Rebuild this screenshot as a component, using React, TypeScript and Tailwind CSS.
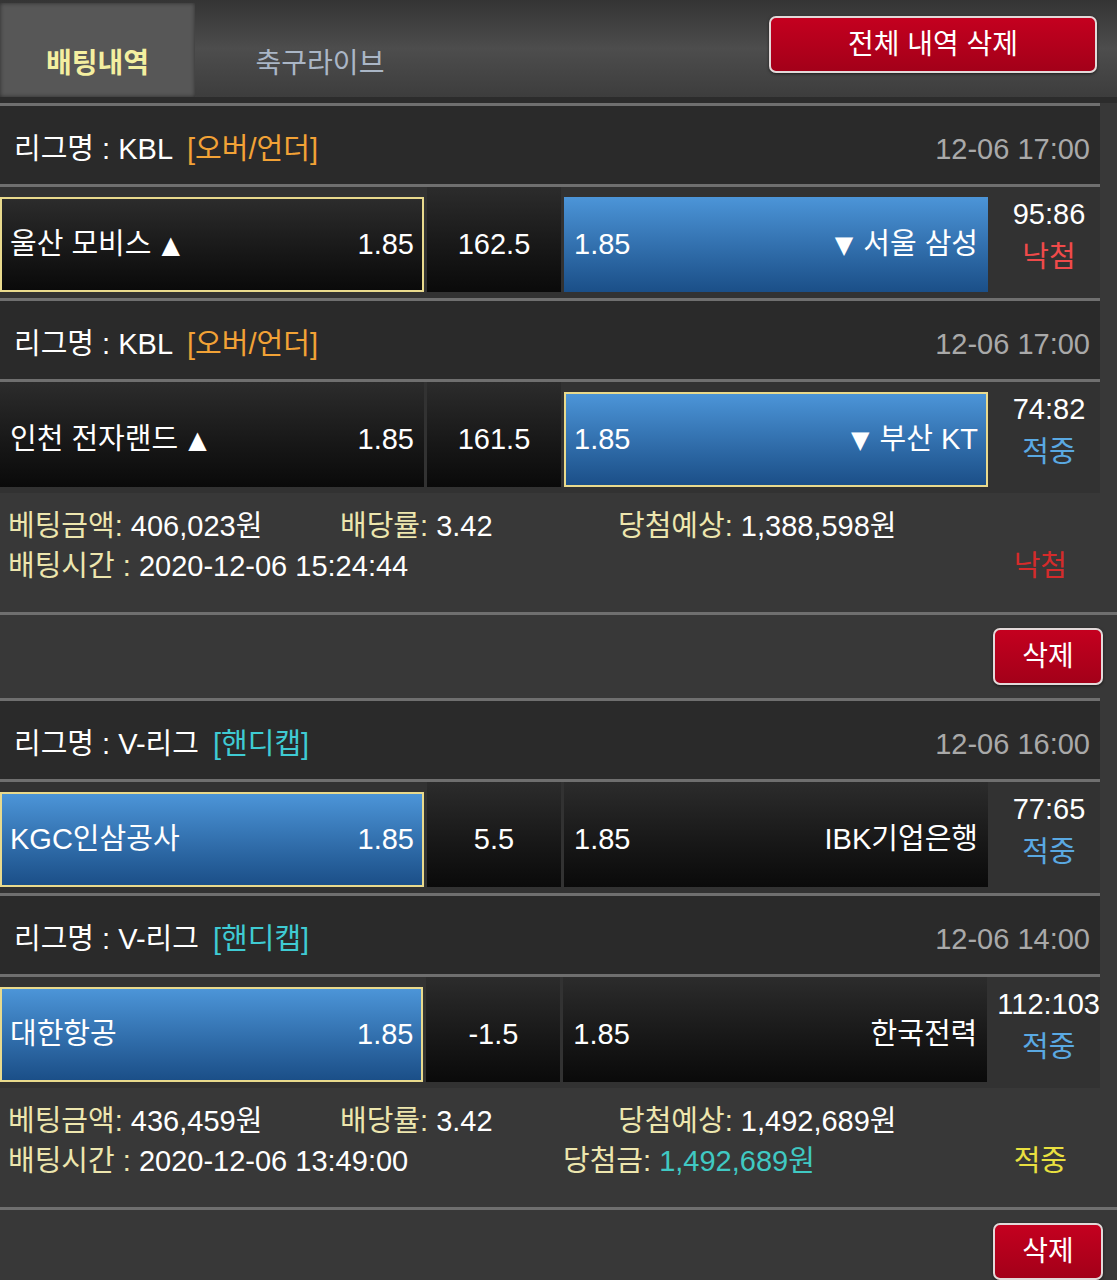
import React from 'react';

type Side = 'home' | 'away';

interface Match {
  league: string;
  tag: string;
  tagColor: string;
  date: string;
  home: string;
  homeArrow?: boolean;
  homeOdds: string;
  line: string;
  awayOdds: string;
  away: string;
  awayArrow?: boolean;
  winner: Side;
  pick: Side;
  score: string;
  hit: boolean;
}

interface Bet {
  matches: Match[];
  amount: string;
  rate: string;
  expected: string;
  time: string;
  payout?: string;
  hit: boolean;
}

const bets: Bet[] = [
  {
    matches: [
      {
        league: 'KBL',
        tag: '[오버/언더]',
        tagColor: 'text-[#f2a236]',
        date: '12-06 17:00',
        home: '울산 모비스',
        homeArrow: true,
        homeOdds: '1.85',
        line: '162.5',
        awayOdds: '1.85',
        away: '서울 삼성',
        awayArrow: true,
        winner: 'away',
        pick: 'home',
        score: '95:86',
        hit: false,
      },
      {
        league: 'KBL',
        tag: '[오버/언더]',
        tagColor: 'text-[#f2a236]',
        date: '12-06 17:00',
        home: '인천 전자랜드',
        homeArrow: true,
        homeOdds: '1.85',
        line: '161.5',
        awayOdds: '1.85',
        away: '부산 KT',
        awayArrow: true,
        winner: 'away',
        pick: 'away',
        score: '74:82',
        hit: true,
      },
    ],
    amount: '406,023원',
    rate: '3.42',
    expected: '1,388,598원',
    time: '2020-12-06 15:24:44',
    hit: false,
  },
  {
    matches: [
      {
        league: 'V-리그',
        tag: '[핸디캡]',
        tagColor: 'text-[#3fcbd3]',
        date: '12-06 16:00',
        home: 'KGC인삼공사',
        homeOdds: '1.85',
        line: '5.5',
        awayOdds: '1.85',
        away: 'IBK기업은행',
        winner: 'home',
        pick: 'home',
        score: '77:65',
        hit: true,
      },
      {
        league: 'V-리그',
        tag: '[핸디캡]',
        tagColor: 'text-[#3fcbd3]',
        date: '12-06 14:00',
        home: '대한항공',
        homeOdds: '1.85',
        line: '-1.5',
        awayOdds: '1.85',
        away: '한국전력',
        winner: 'home',
        pick: 'home',
        score: '112:103',
        hit: true,
      },
    ],
    amount: '436,459원',
    rate: '3.42',
    expected: '1,492,689원',
    time: '2020-12-06 13:49:00',
    payout: '1,492,689원',
    hit: true,
  },
];

function Line({ full }: { full?: boolean }) {
  return <div className={`h-[3px] bg-[#6f6f6f] ${full ? 'w-full' : 'w-[1100px]'}`} />;
}

function Triangle({ up }: { up?: boolean }) {
  return <span className="font-['DejaVu_Sans'] text-[24px]">{up ? '▲' : '▼'}</span>;
}

function TeamCell({
  blue,
  picked,
  children,
}: {
  blue: boolean;
  picked: boolean;
  children: React.ReactNode;
}) {
  const raised = blue || picked;
  return (
    <div
      className={`w-[424px] flex items-center justify-between ${
        raised ? 'mt-[10px] h-[95px]' : 'h-[105px] pt-[10px]'
      } ${
        blue
          ? 'bg-gradient-to-b from-[#4c95d8] to-[#1b4f88]'
          : 'bg-gradient-to-b from-[#2c2c2c] to-[#0a0a0a]'
      } ${picked ? 'border-2 border-[#e9da8d] px-[8px]' : 'px-[10px]'}`}
    >
      {children}
    </div>
  );
}

function MatchBlock({ m }: { m: Match }) {
  return (
    <>
      {/* League header */}
      <div className="w-[1100px] h-[78px] bg-[#2a2a2a] flex items-center justify-between pl-[14px] pr-[10px] pt-[9px]">
        <div className="text-white">
          리그명 : {m.league}
          <span className={`ml-[14px] ${m.tagColor}`}>{m.tag}</span>
        </div>
        <div className="text-[#a9a9a9]">{m.date}</div>
      </div>
      <Line />

      {/* Match row */}
      <div className="w-[1100px] h-[111px] flex items-start bg-[#323232]">
        <TeamCell blue={m.winner === 'home'} picked={m.pick === 'home'}>
          <span className="flex items-center gap-[10px]">
            {m.home}
            {m.homeArrow && <Triangle up />}
          </span>
          <span>{m.homeOdds}</span>
        </TeamCell>
        <div className="ml-[3px] w-[134px] h-[105px] pt-[10px] flex items-center justify-center bg-gradient-to-b from-[#2c2c2c] to-[#0a0a0a]">
          {m.line}
        </div>
        <div className="ml-[3px]">
          <TeamCell blue={m.winner === 'away'} picked={m.pick === 'away'}>
            <span>{m.awayOdds}</span>
            <span className="flex items-center gap-[10px]">
              {m.awayArrow && <Triangle />}
              {m.away}
            </span>
          </TeamCell>
        </div>
        <div className="flex-1 h-[105px] flex flex-col items-center pt-[6px] pl-[10px] leading-[43px]">
          <span className="text-white whitespace-nowrap">{m.score}</span>
          <span className={m.hit ? 'text-[#5aa9e2]' : 'text-[#f04a4a]'}>{m.hit ? '적중' : '낙첨'}</span>
        </div>
      </div>
    </>
  );
}

function DeleteButton({ label, wide }: { label: string; wide?: boolean }) {
  return (
    <button
      className={`${
        wide ? 'w-[328px]' : 'w-[110px]'
      } h-[57px] rounded-[7px] border-2 border-[#e2d9d9] bg-gradient-to-b from-[#c4001f] to-[#a30019] text-white text-[28px] shadow-[0_1px_3px_rgba(0,0,0,0.6)]`}
    >
      {label}
    </button>
  );
}

function BetCard({ bet }: { bet: Bet }) {
  const label = 'text-[#ede6ae]';
  return (
    <div>
      {bet.matches.map((m, i) => (
        <div key={i}>
          <Line />
          <MatchBlock m={m} />
        </div>
      ))}

      {/* Summary */}
      <div className="h-[119px] pt-[13px] pl-[8px] pr-[50px] leading-[40px] text-white">
        <div className="flex">
          <div className="w-[332px]">
            <span className={label}>베팅금액:</span> {bet.amount}
          </div>
          <div className="w-[278px]">
            <span className={label}>배당률:</span> {bet.rate}
          </div>
          <div>
            <span className={label}>당첨예상:</span> {bet.expected}
          </div>
        </div>
        <div className="flex">
          <div className="w-[555px]">
            <span className={label}>배팅시간 :</span> {bet.time}
          </div>
          {bet.payout && (
            <div>
              <span className={label}>당첨금:</span> <span className="text-[#40c9c3]">{bet.payout}</span>
            </div>
          )}
          <div className={`ml-auto ${bet.hit ? 'text-[#e9e040]' : 'text-[#d42b2b]'}`}>
            {bet.hit ? '적중' : '낙첨'}
          </div>
        </div>
      </div>
      <Line full />

      {/* Delete row */}
      <div className="h-[83px] pt-[13px] pr-[14px] flex justify-end items-start">
        <DeleteButton label="삭제" />
      </div>
    </div>
  );
}

export default function App() {
  return (
    <div className="w-[1117px] h-[1280px] overflow-hidden bg-[#383838] text-white text-[29px] font-['Liberation_Sans','Noto_Sans_CJK_KR',sans-serif]">
      {/* Top bar */}
      <div className="h-[97px] bg-gradient-to-b from-[#343434] via-[#4d4d4d] to-[#3d3d3d] flex items-stretch pt-[3px]">
        <div className="w-[195px] bg-[#575757] shadow-[inset_0_0_4px_rgba(0,0,0,0.5)] flex items-center justify-center pt-[28px]">
          <span className="font-bold text-[28px] text-[#f4efa0]">배팅내역</span>
        </div>
        <div className="w-[250px] flex items-center justify-center pt-[28px]">
          <span className="text-[28px] text-[#aab6c6]">축구라이브</span>
        </div>
        <div className="ml-auto pt-[13px] pr-[20px]">
          <DeleteButton label="전체 내역 삭제" wide />
        </div>
      </div>
      <div className="h-[6px] bg-[#2c2c2c]" />

      {bets.map((b, i) => (
        <BetCard key={i} bet={b} />
      ))}
    </div>
  );
}
